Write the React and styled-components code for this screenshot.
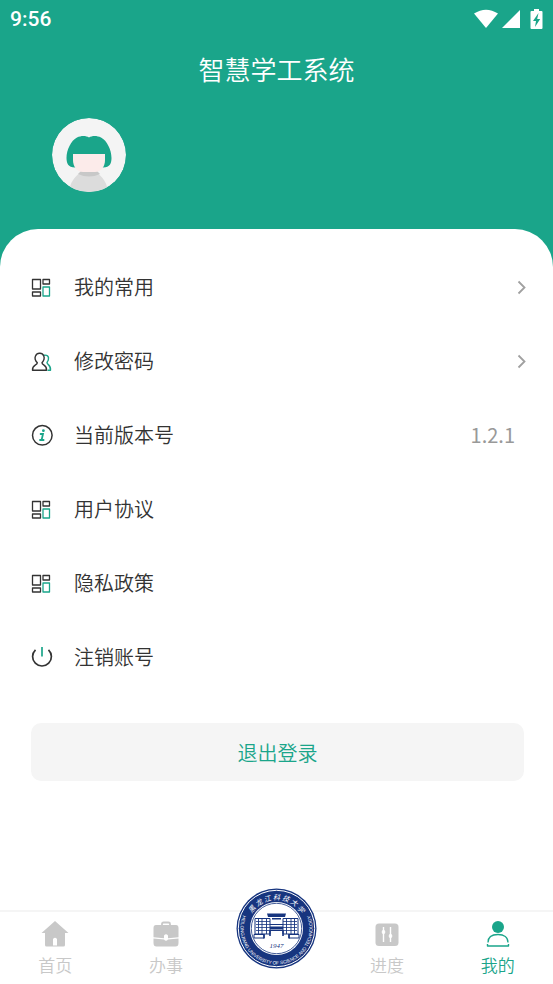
import React from "react";
import styled, { createGlobalStyle } from "styled-components";

const GREEN = "#1aa58a";
const INK = "#333333";
const MUTED = "#c8c8c8";
const NAVY = "#17357f";

const GlobalStyle = createGlobalStyle`
  *, *::before, *::after { box-sizing: border-box; }
  body {
    margin: 0;
    background: #ffffff;
    color: ${INK};
    font-family: "Noto Sans CJK SC", "Noto Sans", sans-serif;
    font-weight: 350;
  }
  button { font: inherit; color: inherit; border: 0; padding: 0; background: none; cursor: pointer; }
  svg { display: block; flex: none; }
`;

const Page = styled.div`
  min-height: 100vh;
  display: flex;
  flex-direction: column;
`;

const Header = styled.header`
  background: ${GREEN};
  color: #ffffff;
  padding-bottom: 76px;
`;

const StatusBar = styled.div`
  height: 38px;
  padding: 0 8px 0 10px;
  display: flex;
  align-items: center;
  justify-content: space-between;
`;

const Clock = styled.time`
  font: 500 21px/38px Roboto, sans-serif;
`;

const StatusIcons = styled.div`
  display: flex;
  align-items: center;
`;

const Title = styled.h1`
  margin: 0;
  font-size: 26px;
  line-height: 62px;
  font-weight: 350;
  text-align: center;
`;

const AvatarButton = styled.button`
  display: block;
  margin: 18px 0 0 52px;
  border-radius: 50%;
`;

const Sheet = styled.main`
  flex: 1;
  margin-top: -39px;
  padding-top: 21px;
  border-radius: 38px 38px 0 0;
  background: #ffffff;
`;

const Menu = styled.ul`
  list-style: none;
  margin: 0;
  padding: 0;
`;

const MenuRow = styled.button`
  width: 100%;
  height: 74px;
  padding: 0 26px 0 30px;
  display: flex;
  align-items: center;
  text-align: left;
`;

const MenuLabel = styled.span`
  flex: 1;
  margin-left: 20px;
  font-size: 20px;
  line-height: 30px;
`;

const Version = styled.span`
  margin-right: 12px;
  font-size: 20px;
  font-weight: 400;
  line-height: 30px;
  color: #999999;
`;

const LogoutButton = styled.button`
  display: block;
  width: calc(100% - 60px);
  height: 58px;
  margin: 29px 29px 48px 31px;
  border-radius: 10px;
  background: #f5f5f5;
  color: ${GREEN};
  font-size: 20px;
`;

const TabBar = styled.nav`
  position: sticky;
  bottom: 0;
  height: 74px;
  display: grid;
  grid-template-columns: repeat(5, 1fr);
  background: #ffffff;
  border-top: 2px solid #f5f5f5;
`;

const Tab = styled.button`
  display: flex;
  flex-direction: column;
  align-items: center;
  padding-top: 8px;
  color: ${(p) => (p.$active ? GREEN : MUTED)};
`;

const TabLabel = styled.span`
  margin-top: 5px;
  font-size: 17px;
  line-height: 24px;
`;

const EmblemButton = styled.button`
  justify-self: center;
  align-self: start;
  margin-top: -24px;
  border-radius: 50%;
`;

const WifiIcon = () => (
  <svg width="24" height="20" viewBox="0 0 24 20" aria-hidden="true">
    <path d="M0 4.6Q12-3.2 24 4.6L12 19Z" fill="#fff" />
  </svg>
);

const SignalIcon = () => (
  <svg width="27" height="20" viewBox="0 0 27 20" aria-hidden="true">
    <path d="M22 1V19H4Z" fill="#fff" />
  </svg>
);

const BatteryIcon = () => (
  <svg width="20" height="22" viewBox="0 0 20 22" aria-hidden="true">
    <path d="M9 1h5v2h2.500q1 0 1 1v16q0 1-1 1h-10q-1 0-1-1V4q0-1 1-1H9Z" fill="#fff" />
    <path d="M13.500 5 8 13h3l-1 6 5.200-8h-3Z" fill={GREEN} />
  </svg>
);

const Avatar = () => (
  <svg width="74" height="74" viewBox="0 0 74 74" aria-hidden="true">
    <defs>
      <clipPath id="avatar-disc"><circle cx="37" cy="37" r="37" /></clipPath>
    </defs>
    <g clipPath="url(#avatar-disc)">
      <circle cx="37" cy="37" r="37" fill="#f4f4f4" />
      <path d="M17 74C18 65 22 59 28 55H45C51 59 55 65 56 74Z" fill="#dcdcdc" />
      <path d="M26 56 29 53H45L48 56Q37 61 26 56Z" fill="#c8c8c8" />
      <path d="M37 19.500C40 17.500 45 17.500 49 19.500C55 22.500 59.500 32 59.500 40C59.500 45 58 49.500 51 49.500H23C16 49.500 14.500 45 14.500 40C14.500 32 19 22.500 25 19.500C29 17.500 34 17.500 37 19.500Z" fill={GREEN} />
      <path d="M21 36H53V42C53 49 49 54 43 54H31C25 54 21 49 21 42Z" fill="#fcebea" />
    </g>
  </svg>
);

const GridIcon = () => (
  <svg width="24" height="24" viewBox="0 0 24 24" fill="none" stroke={INK} strokeWidth="1.300" strokeLinejoin="round" aria-hidden="true">
    <rect x="2.500" y="4.500" width="8" height="9.500" />
    <rect x="13" y="4.500" width="6.500" height="4.500" />
    <rect x="2.500" y="17" width="8" height="4" />
    <rect x="13" y="12" width="6.500" height="9" stroke={GREEN} />
  </svg>
);

const PeopleIcon = () => (
  <svg width="24" height="24" viewBox="0 1 24 24" fill="none" strokeWidth="1.400" strokeLinecap="round" strokeLinejoin="round" aria-hidden="true">
    <path d="M14 7.200C20 6.500 19 12 17 14.500C17 17 21 16.500 20.500 22.200H18" stroke={GREEN} />
    <path d="M7.300 14.800C2.500 9.500 6.500 5 9.700 5.200C13 5 16.500 9.500 12 14.800C12 17.500 17 16.500 16.500 22.200H2.500C2.200 16.500 7.300 17.500 7.300 14.800Z" stroke={INK} />
  </svg>
);

const InfoIcon = () => (
  <svg width="24" height="24" viewBox="0 0 24 24" fill="none" aria-hidden="true">
    <circle cx="12.300" cy="12.300" r="9.800" stroke={INK} strokeWidth="1.500" />
    <circle cx="13.400" cy="7.700" r="1.400" fill={GREEN} />
    <path d="M10.600 11H13L11.600 17H13.600M10 17H11.600" stroke={GREEN} strokeWidth="1.800" strokeLinecap="round" />
  </svg>
);

const PowerIcon = () => (
  <svg width="24" height="24" viewBox="0 0 24 24" fill="none" strokeWidth="1.700" aria-hidden="true">
    <path d="M5.500 4.800A9.400 9.400 0 1 0 18.500 4.800" stroke={INK} />
    <path d="M12 2V11.500" stroke={GREEN} />
  </svg>
);

const Chevron = () => (
  <svg width="12" height="16" viewBox="0 0 12 16" fill="none" aria-hidden="true">
    <path d="M3.500 2.500 9.500 8.500 3.500 14.500" stroke="#a0a0a0" strokeWidth="1.800" />
  </svg>
);

const HomeIcon = () => (
  <svg width="28" height="28" viewBox="0 0 28 28" fill="currentColor" aria-hidden="true">
    <path fillRule="evenodd" d="M14 1 27.500 13H24V25Q24 26.500 22.500 26.500H5.500Q4 26.500 4 25V13H.5ZM12 19V25.500H16V19Q14 16.500 12 19Z" />
  </svg>
);

const CaseIcon = () => (
  <svg width="28" height="28" viewBox="0 0 28 28" aria-hidden="true">
    <path d="M10 6V4Q10 2.500 11.500 2.500H16.500Q18 2.500 18 4V6" fill="none" stroke="currentColor" strokeWidth="1.800" />
    <path d="M4 5H24Q26.500 5 26.500 8V17.300L16 18.300V15.500Q14 13 12 15.500V18.300L1.500 17.300V8Q1.500 5 4 5Z" fill="currentColor" />
    <path d="M1.500 18.500 12 19.500Q14 22 16 19.500L26.500 18.500V23Q26.500 26.500 23.500 26.500H4.500Q1.500 26.500 1.500 23Z" fill="currentColor" />
  </svg>
);

const ProgressIcon = () => (
  <svg width="28" height="28" viewBox="0 0 28 28" aria-hidden="true">
    <rect x="2.500" y="3.500" width="23" height="22.500" rx="3.500" fill="currentColor" />
    <path d="M10.500 7V22M17.500 7V22" stroke="#fff" strokeWidth="1.400" />
    <path d="M10.500 9.500 12 12 10.500 14.500 9 12ZM17.500 13.500 19 16 17.500 18.500 16 16Z" fill="#fff" stroke="#fff" strokeLinejoin="round" />
  </svg>
);

const PersonIcon = () => (
  <svg width="28" height="28" viewBox="0 0 28 28" fill="none" aria-hidden="true">
    <circle cx="14" cy="7" r="6" fill="currentColor" />
    <path d="M4 22.500C4 17 8 14.500 14 14.500S24 17 24 22.500" stroke="currentColor" strokeWidth="1.300" />
    <path d="M3.500 24V26H24.500V24" stroke="currentColor" strokeWidth="1.400" strokeLinejoin="round" />
  </svg>
);

const Emblem = () => (
  <svg width="81" height="81" viewBox="0 0 81 81" aria-hidden="true">
    <defs>
      <path id="name-arc" d="M14 29.500A28.700 28.700 0 0 1 67 29.500" />
      <path id="motto-arc" d="M9.300 22.500A36 36 0 1 0 71.700 22.500" />
    </defs>
    <circle cx="40.500" cy="40.500" r="40" fill={NAVY} />
    <circle cx="40.500" cy="40.500" r="38.200" fill="none" stroke="#fff" strokeWidth="1" />
    <circle cx="40.500" cy="40.500" r="26.500" fill="#fff" />
    <circle cx="40.500" cy="40.500" r="25.200" fill="none" stroke={NAVY} strokeWidth=".8" />
    <text fontFamily="'Noto Sans CJK SC', sans-serif" fontSize="7" fontWeight="400" fontStyle="italic" fill="#fff" textAnchor="middle">
      <textPath href="#name-arc" startOffset="50%">黑 龙 江 科 技 大 学</textPath>
    </text>
    <text fontFamily="'Liberation Sans Narrow', 'Liberation Sans', sans-serif" fontSize="4.700" fontWeight="400" fill="#fff" textAnchor="middle">
      <textPath href="#motto-arc" startOffset="50%">HEILONGJIANG UNIVERSITY OF SCIENCE AND TECHNOLOGY</textPath>
    </text>
    <path d="M31 25.500H50L49 29H32ZM36 30H45V31.500H36Z" fill={NAVY} />
    <g fill="none" stroke={NAVY}>
      <path d="M19 30.500H34V46H19ZM47 30.500H62V46H47Z" />
      <path d="M20 33.500H34M20 36.500H34M20 39.500H34M20 42.500H34M47 33.500H61M47 36.500H61M47 39.500H61M47 42.500H61" strokeWidth=".8" />
      <path d="M22.500 30V46M26 30V46M30.500 30V46M50.500 30V46M55 30V46M58.500 30V46" strokeWidth=".9" />
      <path d="M34 36.500H47M34 42.500H47M18 46.500H28V50H18ZM53 46.500H63V50H53Z" />
      <path d="M28 46V50.500M53 46V50.500M34 42V48M47 42V48" strokeWidth="1.600" />
    </g>
    <path d="M34 38.500H47V41.500H34Z" fill={NAVY} />
    <text x="40.500" y="60" fontFamily="'Liberation Serif', serif" fontWeight="400" fontStyle="italic" fontSize="7" fill={NAVY} textAnchor="middle">1947</text>
  </svg>
);

const menuItems = [
  { label: "我的常用", Icon: GridIcon, arrow: true },
  { label: "修改密码", Icon: PeopleIcon, arrow: true },
  { label: "当前版本号", Icon: InfoIcon, value: "1.2.1" },
  { label: "用户协议", Icon: GridIcon },
  { label: "隐私政策", Icon: GridIcon },
  { label: "注销账号", Icon: PowerIcon },
];

const NavTab = ({ label, Icon, active }) => (
  <Tab type="button" $active={active} aria-current={active ? "page" : undefined}>
    <Icon />
    <TabLabel>{label}</TabLabel>
  </Tab>
);

export default function App() {
  return (
    <Page>
      <GlobalStyle />
      <Header>
        <StatusBar>
          <Clock>9:56</Clock>
          <StatusIcons>
            <WifiIcon />
            <SignalIcon />
            <BatteryIcon />
          </StatusIcons>
        </StatusBar>
        <Title>智慧学工系统</Title>
        <AvatarButton type="button" aria-label="头像">
          <Avatar />
        </AvatarButton>
      </Header>
      <Sheet>
        <Menu>
          {menuItems.map(({ label, Icon, arrow, value }) => (
            <li key={label}>
              <MenuRow type="button">
                <Icon />
                <MenuLabel>{label}</MenuLabel>
                {value && <Version>{value}</Version>}
                {arrow && <Chevron />}
              </MenuRow>
            </li>
          ))}
        </Menu>
        <LogoutButton type="button">退出登录</LogoutButton>
      </Sheet>
      <TabBar>
        <NavTab label="首页" Icon={HomeIcon} />
        <NavTab label="办事" Icon={CaseIcon} />
        <EmblemButton type="button" aria-label="黑龙江科技大学">
          <Emblem />
        </EmblemButton>
        <NavTab label="进度" Icon={ProgressIcon} />
        <NavTab label="我的" Icon={PersonIcon} active />
      </TabBar>
    </Page>
  );
}
